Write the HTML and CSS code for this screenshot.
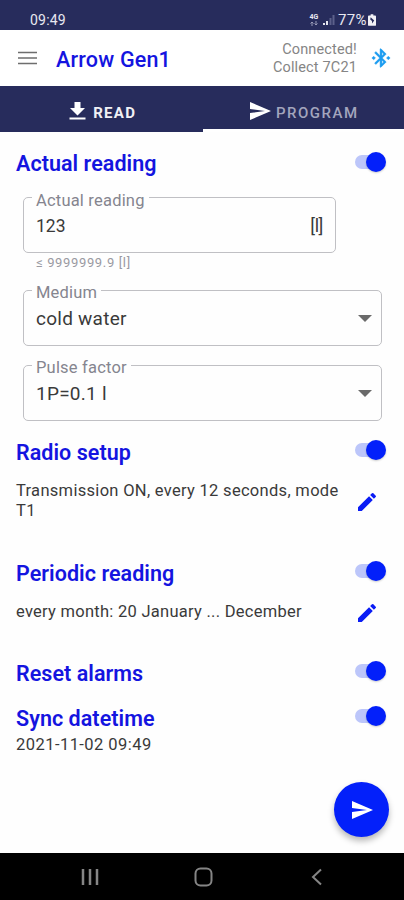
FILE: index.html
```
<!DOCTYPE html>
<html lang="en">
<head>
    <meta charset="UTF-8">
    <meta name="viewport" content="width=device-width, initial-scale=1.0">
    <title>Arrow Gen1</title>
    <link rel="stylesheet" href="styles.css">
</head>
<body>
    <div class="status-bar">
        <span class="clock">09:49</span>
        <div class="status-icons">
            <div class="network"><span>4G</span><svg width="10" height="5" viewBox="0 0 10 5"><path d="M3 5V1M1.5 2.5L3 1l1.5 1.5M7 0v4M5.5 2.5L7 4l1.500-1.500" fill="none" stroke="#9a9cb8" stroke-width="1"/></svg></div>
            <svg class="signal" width="13" height="12" viewBox="0 0 13 12">
                <path d="M1 9h2v2H1zM4 7h2v4H4z" fill="#e4e5ee"/>
                <path d="M7.500 4h2v7h-2zM10.500 1h2v10h-2z" fill="#5c608a"/>
            </svg>
            <span class="percent">77%</span>
            <svg class="battery" width="8" height="12" viewBox="0 0 9 13">
                <path d="M3 0h3v1.500h2q1 0 1 1V12q0 1-1 1H1q-1 0-1-1V2.500q0-1 1-1h2z" fill="#f1f1f6"/>
                <path d="M3 3.500L7 7 4.500 10.500 4.500 7.500 2.500 6z" fill="#272c5c"/>
            </svg>
        </div>
    </div>

    <header class="app-bar">
        <svg class="menu" width="19" height="14" viewBox="0 0 19 14"><path d="M0 1.500h19M0 7h19M0 12.500h19" stroke="#6e6e6e" stroke-width="1.700"/></svg>
        <h1>Arrow Gen1</h1>
        <div class="connection">Connected!<br>Collect 7C21</div>
        <svg class="bluetooth" width="22" height="22" viewBox="0 0 24 24" fill="#1a9bf0" stroke="#1a9bf0" stroke-width="0.5"><path d="M6 12l-2-2-2 2 2 2 2-2zm11.710-4.290L12 2h-1v7.590L6.410 5 5 6.410 10.590 12 5 17.590 6.410 19 11 14.410V22h1l5.710-5.710-4.300-4.290 4.300-4.290zM13 5.830l1.880 1.880L13 9.590V5.830zm1.880 10.460L13 18.170v-3.760l1.880 1.880zM20 10l-2 2 2 2 2-2-2-2z"/></svg>
    </header>

    <nav class="tabs">
        <div class="tab tab-read">
            <svg width="24" height="24" viewBox="0 0 24 24" fill="#fff"><path d="M20 9h-4.500V3h-6v6H5l7.500 7.500L20 9zM4.500 18.500v2h16v-2z"/></svg>
            <span>READ</span>
        </div>
        <div class="tab tab-program">
            <svg width="24" height="24" viewBox="0 0 24 24" fill="#fff"><path d="M2 21l21-9L2 3v7l15 2-15 2z"/></svg>
            <span>PROGRAM</span>
        </div>
    </nav>

    <main>
        <div class="section-head head-actual">
            <h2>Actual reading</h2>
            <span class="switch"></span>
        </div>
        <div class="field field-short">
            <label>Actual reading</label>
            <span class="value val-number">123</span>
            <span class="unit">[l]</span>
        </div>
        <div class="helper">≤ 9999999.9 [l]</div>
        <div class="field">
            <label>Medium</label>
            <span class="value">cold water</span>
            <span class="arrow"></span>
        </div>
        <div class="field">
            <label>Pulse factor</label>
            <span class="value">1P=0.1 l</span>
            <span class="arrow"></span>
        </div>

        <div class="section-head head-radio">
            <h2>Radio setup</h2>
            <span class="switch"></span>
        </div>
        <div class="detail">
            <p>Transmission ON, every 12 seconds, mode<br>T1</p>
            <svg width="24" height="24" viewBox="0 0 24 24" fill="#0a1cf5"><path d="M3 17.250V21h3.750L17.810 9.940l-3.750-3.750L3 17.250zM20.710 7.040a1 1 0 0 0 0-1.410l-2.340-2.340a1 1 0 0 0-1.410 0l-1.830 1.830 3.750 3.750 1.830-1.830z"/></svg>
        </div>

        <div class="section-head head-periodic">
            <h2>Periodic reading</h2>
            <span class="switch"></span>
        </div>
        <div class="detail detail-single">
            <p>every month: 20 January ... December</p>
            <svg width="24" height="24" viewBox="0 0 24 24" fill="#0a1cf5"><path d="M3 17.250V21h3.750L17.810 9.940l-3.750-3.750L3 17.250zM20.710 7.040a1 1 0 0 0 0-1.410l-2.340-2.340a1 1 0 0 0-1.410 0l-1.830 1.830 3.750 3.750 1.830-1.830z"/></svg>
        </div>

        <div class="section-head head-reset">
            <h2>Reset alarms</h2>
            <span class="switch"></span>
        </div>
        <div class="section-head head-sync">
            <h2>Sync datetime</h2>
            <span class="switch"></span>
        </div>
        <p class="datetime">2021-11-02 09:49</p>

        <button class="fab" aria-label="Send">
            <svg width="24" height="24" viewBox="0 0 24 24" fill="#fff"><path d="M2 21l21-9L2 3v7l15 2-15 2z"/></svg>
        </button>
    </main>

    <footer class="nav-bar">
        <svg width="20" height="20" viewBox="0 0 20 20"><path d="M3 2v16M10 2v16M17 2v16" stroke="#858585" stroke-width="2.500"/></svg>
        <svg width="20" height="20" viewBox="0 0 20 20"><rect x="1.500" y="1.500" width="16" height="17" rx="5" fill="none" stroke="#858585" stroke-width="2"/></svg>
        <svg width="20" height="20" viewBox="0 0 20 20"><path d="M14 2.500L6 10l8 7.500" fill="none" stroke="#858585" stroke-width="2"/></svg>
    </footer>
</body>
</html>
```
FILE: styles.css
```
* {
    box-sizing: border-box;
}

body {
    margin: 0;
    width: 404px;
    height: 900px;
    display: flex;
    flex-direction: column;
    font-family: Roboto, sans-serif;
    background-color: #fefefe;
    color: #3a3a3a;
    overflow: hidden;
}

h1, h2, p {
    margin: 0;
    white-space: nowrap;
}

/* status bar */
.status-bar {
    height: 30px;
    padding: 10px 28px 0 30px;
    display: flex;
    justify-content: space-between;
    background-color: #272c5c;
    color: #e8e8f0;
    font-size: 14px;
    line-height: 20px;
}

.clock {
    letter-spacing: 0.2px;
}

.status-icons {
    display: flex;
    align-items: center;
}

.network {
    width: 10px;
    margin-right: 3px;
    display: flex;
    flex-direction: column;
    align-items: center;
    font-size: 7px;
    font-weight: bold;
    line-height: 7px;
}

.percent {
    margin: 0 1px 0 3px;
    font-size: 15px;
    letter-spacing: 0.4px;
}

/* title bar */
.app-bar {
    height: 56px;
    padding: 0 12px 0 18px;
    display: flex;
    align-items: center;
    background-color: #fff;
}

.app-bar h1 {
    margin: 2px 0 0 19px;
    font-size: 21.5px;
    font-weight: 500;
    letter-spacing: 0.2px;
    color: #1414e0;
}

.connection {
    margin-left: auto;
    margin-right: 13px;
    padding-top: 2px;
    text-align: right;
    font-size: 14.5px;
    line-height: 18px;
    letter-spacing: 0.15px;
    color: #858585;
}

/* tabs */
.tabs {
    height: 46px;
    display: flex;
    background-color: #272c5c;
}

.tab {
    flex: 1;
    display: flex;
    align-items: center;
    justify-content: center;
    font-size: 15px;
    font-weight: bold;
    letter-spacing: 1.3px;
    color: #f0f0f5;
}

.tab span {
    padding-top: 8px;
}

.tab svg {
    margin-right: 4px;
}

.tab-read {
    padding-right: 1px;
}

.tab-read svg {
    margin-top: 3px;
}

.tab-program {
    border-bottom: 3px solid #fff;
    font-weight: 500;
    letter-spacing: 1.5px;
    color: #a3a5bd;
}

.tab-program svg {
    margin-top: 6px;
}

.tab-program span {
    padding-top: 10px;
}

/* content */
main {
    flex: 1;
    padding: 12px 18px 0 16px;
    position: relative;
}

.section-head {
    height: 36px;
    display: flex;
    align-items: center;
    justify-content: space-between;
}

.section-head h2 {
    padding-top: 4px;
    font-size: 21.5px;
    line-height: 26px;
    font-weight: 600;
    letter-spacing: 0.05px;
    color: #1414e0;
}

.head-radio {
    margin-top: 12px;
}

.head-periodic {
    margin-top: 33px;
}

.head-reset {
    margin-top: 32px;
}

.head-sync {
    margin-top: 9px;
}

.switch {
    width: 31px;
    height: 20px;
    margin-bottom: 2px;
    display: flex;
    align-items: center;
}

.head-actual .switch {
    margin-bottom: 0;
}

.switch::before {
    content: "";
    width: 26px;
    height: 14px;
    border-radius: 7px;
    background-color: #bcc6fa;
}

.switch::after {
    content: "";
    width: 20px;
    height: 20px;
    margin-left: -15px;
    border-radius: 50%;
    background-color: #0320fa;
    box-shadow: 0 1px 2px rgba(0, 0, 0, 0.2);
}

.field {
    position: relative;
    height: 56px;
    width: 359px;
    margin: 19px 0 0 7px;
    padding: 0 9px 0 12px;
    display: flex;
    align-items: center;
    justify-content: space-between;
    border: 1px solid #c0c0c4;
    border-radius: 5px;
}

.field-short {
    width: 313px;
    margin-top: 17px;
    padding-top: 2px;
    padding-right: 12px;
}

/* label sits on top of the outline */
.field label {
    position: absolute;
    left: 8px;
    top: -8px;
    padding: 0 4px;
    font-size: 16.5px;
    line-height: 20px;
    letter-spacing: 0.2px;
    background-color: #fefefe;
    color: #85858f;
}

.field-short label {
    top: -7px;
}

.value, .unit {
    font-size: 18px;
    line-height: 24px;
}

.value {
    padding-top: 2px;
    font-size: 19px;
    letter-spacing: 0.25px;
}

.val-number {
    padding-top: 0;
    font-size: 17.5px;
    letter-spacing: 0;
}

.unit {
    letter-spacing: -0.4px;
}

.arrow {
    border: 7px solid transparent;
    border-top: 7px solid #6a6a6a;
    border-bottom: 0;
}

.helper {
    height: 18px;
    padding-left: 20px;
    font-size: 13px;
    line-height: 19px;
    letter-spacing: 0.65px;
    color: #9a9aa2;
}

.detail {
    height: 40px;
    margin-top: 12px;
    padding-right: 7px;
    display: flex;
    align-items: center;
    justify-content: space-between;
    font-size: 16.5px;
    line-height: 20px;
    letter-spacing: 0.3px;
}

.detail svg {
    margin-top: 2px;
}

.detail-single {
    height: 20px;
    letter-spacing: 0.27px;
}

.datetime {
    font-size: 16.5px;
    line-height: 20px;
    letter-spacing: 0.45px;
}

/* send button floats over the list */
.fab {
    position: absolute;
    right: 15px;
    bottom: 16px;
    width: 55px;
    height: 55px;
    padding: 0;
    display: flex;
    align-items: center;
    justify-content: center;
    border: none;
    border-radius: 50%;
    background-color: #0320fa;
    box-shadow: 0 4px 6px rgba(0, 0, 0, 0.28);
}

/* android buttons */
.nav-bar {
    height: 47px;
    padding: 0 77px 0 80px;
    display: flex;
    align-items: center;
    justify-content: space-between;
    background-color: #000;
}
```
